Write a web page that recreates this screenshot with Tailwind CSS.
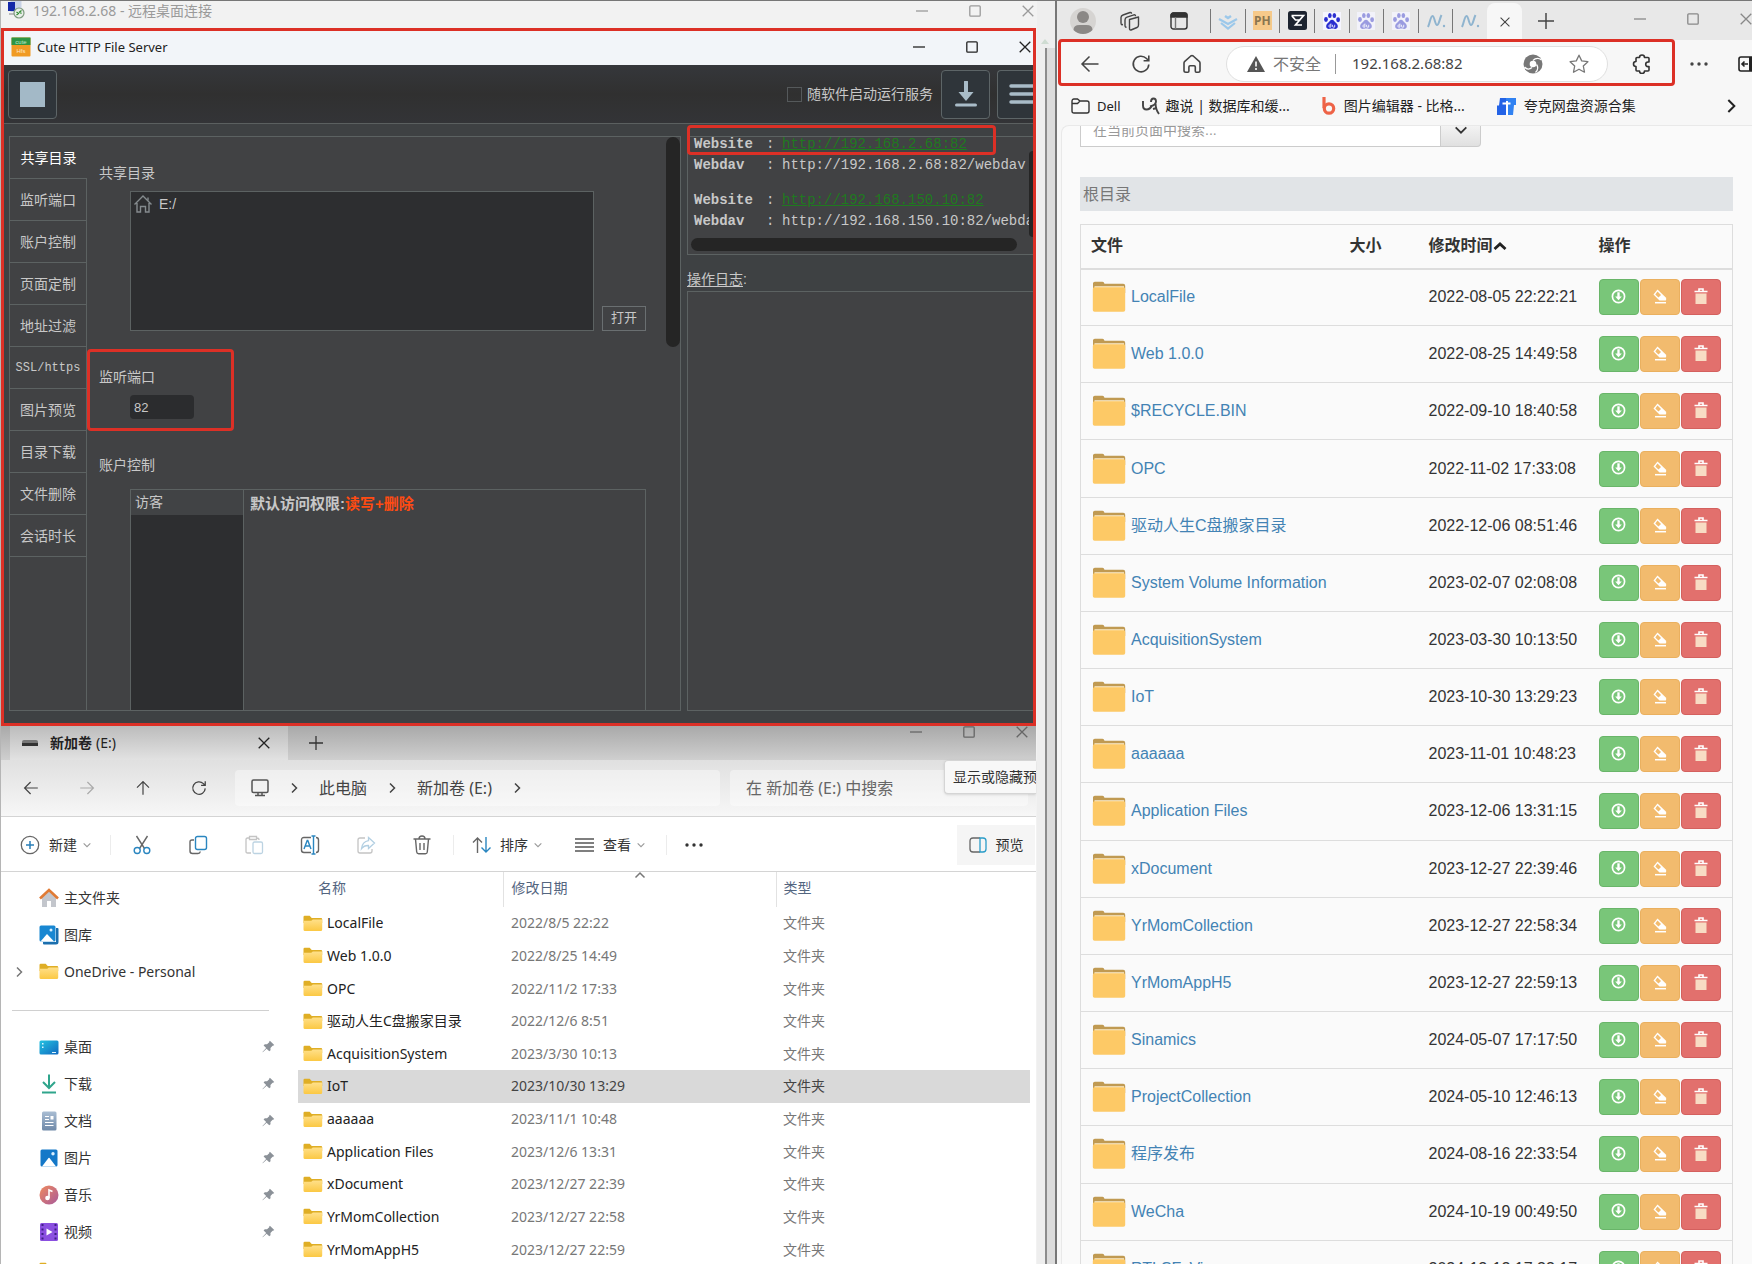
<!DOCTYPE html>
<html lang="zh-CN">
<head>
    <meta charset="UTF-8">
    <meta name="viewport" content="width=device-width, initial-scale=1.0">
    <title>Cute HTTP File Server</title>
    <script src="https://cdn.jsdelivr.net/npm/@tailwindcss/browser@4"></script>
</head>
<body class="bg-[#ececec] font-['Noto_Sans','Noto_Sans_CJK_SC',sans-serif] text-sm text-[#333]">

    <!-- Shared icons -->
    <svg class="absolute size-0">
        <defs>
            <linearGradient id="g-folder" x1="0" y1="0" x2="0" y2="1"><stop offset="0" stop-color="#ffe08a"/><stop offset="1" stop-color="#fbc843"/></linearGradient>
            <linearGradient id="g-desk" x1="0" y1="0" x2="1" y2="1"><stop offset="0" stop-color="#25c3e0"/><stop offset="1" stop-color="#1068c0"/></linearGradient>
            <linearGradient id="g-music" x1="0" y1="0" x2="1" y2="1"><stop offset="0" stop-color="#f08a5d"/><stop offset="1" stop-color="#a85a9b"/></linearGradient>
            <linearGradient id="g-doc" x1="0" y1="0" x2="0" y2="1"><stop offset="0" stop-color="#a9bdd3"/><stop offset="1" stop-color="#6f89a8"/></linearGradient>
        </defs>
        <symbol id="min" viewBox="0 0 12 12"><path d="M0 6h12" fill="none" stroke="currentColor" stroke-width="1.3"/></symbol>
        <symbol id="max" viewBox="0 0 12 12"><rect x=".8" y=".8" width="10.4" height="10.4" rx="1" fill="none" stroke="currentColor" stroke-width="1.3"/></symbol>
        <symbol id="close" viewBox="0 0 12 12"><path d="M.7.7l10.6 10.6M11.3.7L.7 11.3" fill="none" stroke="currentColor" stroke-width="1.3"/></symbol>
        <symbol id="plus" viewBox="0 0 12 12"><path d="M6 0v12M0 6h12" fill="none" stroke="currentColor" stroke-width="1.1"/></symbol>
        <symbol id="right" viewBox="0 0 12 12"><path d="M4 1.5L8.500 6 4 10.500" fill="none" stroke="currentColor" stroke-width="1.500"/></symbol>
        <symbol id="down" viewBox="0 0 12 12"><path d="M2 4l4 4 4-4" fill="none" stroke="currentColor" stroke-width="1.3"/></symbol>
        <symbol id="up" viewBox="0 0 12 12"><path d="M1.500 8.500L6 4l4.500 4.500" fill="none" stroke="currentColor" stroke-width="1.500"/></symbol>
        <symbol id="back" viewBox="0 0 20 20"><path d="M18.500 10H2M9.500 2.500L2 10l7.500 7.500" fill="none" stroke="currentColor" stroke-width="1.5"/></symbol>
        <symbol id="reload" viewBox="0 0 20 20"><path d="M17.800 10.500A7.800 7.800 0 1 1 15.500 4.500L17.500 6.500M17.800 1.500v5.200h-5.200" fill="none" stroke="currentColor" stroke-width="1.6"/></symbol>
        <symbol id="dots" viewBox="0 0 18 6"><g fill="currentColor"><circle cx="2" cy="3" r="1.700"/><circle cx="9" cy="3" r="1.700"/><circle cx="16" cy="3" r="1.700"/></g></symbol>
        <symbol id="folder" viewBox="0 0 20 17"><path d="M.5 2Q.5.8 1.700.8h5l2 2.200h9.300q1.200 0 1.200 1.200V8H.5z" fill="#dfae25"/><path d="M.5 5.800h7.800l1.500-1.300h9.400V14.500q0 1.500-1.500 1.500H2q-1.500 0-1.500-1.500z" fill="url(#g-folder)"/></symbol>
        <symbol id="bigfolder" viewBox="0 0 34 32"><path d="M1 2.500Q1 .7 2.800.7h7.700q1.500 0 2 2h18.700q2 0 2 2V12H1z" fill="#c09a52"/><path d="M2.500 5.300h29.500V9H2.500z" fill="#fff3d6"/><path d="M.8 8q0-1.700 1.700-1.700h29q1.700 0 1.700 1.700v21q0 1.800-1.800 1.800H2.600Q.8 30.800.8 29z" fill="#fdc966"/></symbol>
        <symbol id="paw" viewBox="0 0 20 20"><g fill="currentColor"><ellipse cx="3.300" cy="8.300" rx="2.100" ry="2.700"/><ellipse cx="7.600" cy="3.900" rx="2" ry="2.900"/><ellipse cx="12.600" cy="3.900" rx="2" ry="2.900"/><ellipse cx="16.800" cy="8.600" rx="2.100" ry="2.700"/><path d="M10 8.500c2 0 3 2.200 4.300 3.500 3.500 3 2.500 6.800-.8 6.800-1.500 0-2.200-.4-3.500-.4s-2 .4-3.500.4c-3.300 0-4.300-3.800-.8-6.800C7 10.700 8 8.500 10 8.500z"/></g><path d="M8.800 12.800v4H7.500q-1-.1-1-1.200t1-1.200h1.300M10.600 14.200v2q0 .6.700.6H13v-2.600" fill="none" stroke="#fff" stroke-width=".9"/></symbol>
        <symbol id="pin" viewBox="0 0 14 14"><path d="M8.500.8l4.700 4.700-1.300.8-.5-.1-2.300 2.300.1 2.500-1.400 1.200L5 9.300.8 13.300l-.3-.3 4-4.300L1.700 5.900 3 4.600l2.400.1L7.800 2.500l-.1-.6z" fill="#8b9198"/></symbol>
        <symbol id="nwave" viewBox="0 0 20 16"><path d="M2 14C4 10 4.500 3 6.500 3S9 12 11 12s2.500-6 4.500-10" fill="none" stroke="#8fb4cf" stroke-width="2"/><circle cx="18" cy="13" r="1.200" fill="#8fb4cf"/></symbol>
        <symbol id="pic" viewBox="0 0 18 18"><rect x=".5" y=".5" width="17" height="17" rx="1.500" fill="#1478c8"/><path d="M2 17.500L8.500 9q.5-.6 1 0l6.500 8.500z" fill="#fff"/><circle cx="13" cy="4.800" r="1.700" fill="#d9efff"/></symbol>
    </svg>

    <div class="relative grid h-screen grid-cols-[1037fr_20fr_695fr] overflow-hidden border-t border-[#777]">

        <!-- Remote desktop -->
        <div class="flex min-w-0 flex-col overflow-hidden border-l border-[#b5b5b5] bg-[#f2f2f2]">
            <header class="flex h-[27px] shrink-0 items-start pl-[6px] text-[#9a9a9a]">
                <svg class="mr-2 size-[18px]" viewBox="0 0 18 18"><rect x="3.500" y="0" width="11" height="11" fill="#c9d3e6"/><rect x="1" y="1" width="7" height="9" fill="#1428a8"/><path d="M2 12h8v2H2z" fill="#bbb"/><circle cx="12" cy="12" r="5" fill="#e9eee9" stroke="#7f9a7f" stroke-width="1.200"/><path d="M9.500 11l2 1.500-2 1.500M14.500 9.500l-2 1.500 2 1.500" fill="none" stroke="#2d8a2d" stroke-width="1.200"/></svg>
                <h1 class="leading-5">192.168.2.68 - 远程桌面连接</h1>
                <div class="ml-auto flex gap-[41px] pt-1 pr-[3px]">
                    <button aria-label="最小化"><svg class="size-3"><use href="#min"/></svg></button>
                    <button aria-label="最大化"><svg class="size-3"><use href="#max"/></svg></button>
                    <button aria-label="关闭"><svg class="size-3"><use href="#close"/></svg></button>
                </div>
            </header>

            <!-- File server window -->
            <section class="mr-px shrink-0 border-[3px] border-[#dc3026] bg-[#3e4143] font-['Liberation_Sans','Noto_Sans_CJK_SC',sans-serif] text-[#c8c8c8]">
                <div class="flex h-[34px] items-center bg-[#f2f5f9] pb-[2px] pl-[7px] text-[#222]">
                    <svg class="mr-[6px] size-5" viewBox="0 0 20 20"><rect x=".5" y=".5" width="19" height="19" rx="1" fill="#f09a24"/><path d="M.5.500h19V8H.5z" fill="#2e9443"/><text x="10" y="6.500" font-size="6" text-anchor="middle" fill="#bfe6c6">cute</text><text x="10" y="16" font-size="6" text-anchor="middle" fill="#ffe7c4">Hfs</text></svg>
                    <h2 class="font-['Noto_Sans',sans-serif] text-[13px]">Cute HTTP File Server</h2>
                    <div class="ml-auto flex gap-[41px] pr-[2px]">
                        <button aria-label="最小化"><svg class="size-3"><use href="#min"/></svg></button>
                        <button aria-label="最大化"><svg class="size-3"><use href="#max"/></svg></button>
                        <button aria-label="关闭"><svg class="size-3"><use href="#close"/></svg></button>
                    </div>
                </div>

                <div class="flex h-[59px] items-center overflow-hidden border-b border-[#5b6060] bg-linear-to-b from-[#35373b] via-[#303030] to-[#333437] pl-1">
                    <button aria-label="停止" class="flex size-[49px] items-center justify-center rounded-sm border border-[#5d6567] bg-[#2f353a]"><span class="size-[25px] bg-[#a3b9c7]"></span></button>
                    <label class="mr-2 ml-auto flex items-center gap-[5px] whitespace-nowrap">
                        <input type="checkbox" class="size-[15px] appearance-none border border-[#55595b]">
                        随软件启动运行服务
                    </label>
                    <button aria-label="下载" class="mr-[7px] flex size-[49px] items-center justify-center rounded-sm border border-[#5d6567] bg-[#2f353a]">
                        <svg class="h-[26px] w-[22px]" viewBox="0 0 22 26" fill="none" stroke="#a9bcc8"><path d="M11 1v12" stroke-width="4" stroke-linecap="round"/><path d="M3.500 11h15L11 20z" fill="#a9bcc8" stroke="none"/><path d="M1.500 24h19" stroke-width="3" stroke-linecap="round"/></svg>
                    </button>
                    <button aria-label="菜单" class="flex h-[49px] w-9 items-center justify-end rounded-l-sm border border-r-0 border-[#5d6567] bg-[#2f353a]">
                        <svg class="h-[22px] w-6" viewBox="0 0 24 22" stroke="#a9bcc8" stroke-width="3.500" stroke-linecap="round"><path d="M2 3h24M2 11h24M2 19h24"/></svg>
                    </button>
                </div>

                <div class="flex gap-[6px] pt-3 pb-3 pl-[5px]">
                    <div class="flex w-[672px] border border-[#5c6262] bg-[#414244]">
                        <nav class="flex w-[77px] shrink-0 flex-col">
                            <button class="h-[42px] border-b border-[#5c6262] text-white">共享目录</button>
                            <div id="tabs" class="flex flex-1 flex-col border-r border-[#5c6262]"></div>
                        </nav>

                        <div class="min-w-0 flex-1 pt-[26px] pr-5 pl-3">
                            <section>
                                <h3 class="h-5 leading-5">共享目录</h3>
                                <div class="mt-2 ml-[31px] flex items-end gap-2">
                                    <div class="flex h-[140px] flex-1 items-start gap-[6px] border border-[#5c6262] bg-[#2d2e30] p-[2px]">
                                        <svg class="size-5" viewBox="0 0 20 20" fill="none" stroke="#858b8e" stroke-width="1.400"><path d="M1.500 10.500L10 2l8.500 8.500M4 9v9h3.500v-5.500h5V18H16V9"/><path d="M15 3.500v3"/></svg>
                                        <span class="leading-5">E:/</span>
                                    </div>
                                    <button class="h-[25px] w-11 border border-[#6a6f71] text-[13px]">打开</button>
                                </div>
                            </section>

                            <section class="relative mt-9">
                                <span class="absolute -top-[18px] -left-3 h-[82px] w-[147px] rounded-sm border-[3px] border-[#dc3026]"></span>
                                <label for="port" class="block h-5 leading-5">监听端口</label>
                                <input id="port" value="82" class="mt-2 ml-[31px] block h-6 w-16 rounded-sm bg-[#2b2c2e] px-1 text-[13px]">
                            </section>

                            <section class="mt-9">
                                <h3 class="h-5 leading-5">账户控制</h3>
                                <div class="mt-[14px] ml-[31px] flex h-[221px] border border-b-0 border-[#5c6262]">
                                    <div class="w-[113px] border-r border-[#5c6262] bg-[#2d2e30]">
                                        <p class="h-[25px] bg-[#414345] pl-1 leading-[25px]">访客</p>
                                    </div>
                                    <p class="pt-1 pl-[6px] text-[15px] leading-5 font-bold">默认访问权限:<span class="text-[#ff4b12]">读写+删除</span></p>
                                </div>
                            </section>
                        </div>

                        <div class="w-[14px] shrink-0"><div class="h-[210px] rounded-full bg-[#252525]"></div></div>
                    </div>

                    <div class="flex min-w-0 flex-1 flex-col">
                        <div class="relative border-y border-l border-[#5c6262] bg-[#414244] font-['Liberation_Mono',monospace]">
                            <span class="absolute -top-3 -left-px z-10 h-[30px] w-[309px] rounded-sm border-[3px] border-[#dc3026]"></span>
                            <dl class="grid grid-cols-[72px_16px_1fr] gap-y-[7px] overflow-hidden pl-[6px] leading-[14px] whitespace-nowrap">
                                <dt class="font-bold">Website</dt><dd>:</dd><dd><a href="#" class="text-[#1f7a1f] underline">http://192.168.2.68:82</a></dd>
                                <dt class="mb-[14px] font-bold">Webdav</dt><dd>:</dd><dd>http://192.168.2.68:82/webdav</dd>
                                <dt class="font-bold">Website</dt><dd>:</dd><dd><a href="#" class="text-[#1f7a1f] underline">http://192.168.150.10:82</a></dd>
                                <dt class="font-bold">Webdav</dt><dd>:</dd><dd>http://192.168.150.10:82/webda</dd>
                            </dl>
                            <div class="mt-[10px] mr-4 mb-[3px] ml-[3px] h-[13px] rounded-full bg-[#252525]"></div>
                            <div class="absolute top-[14px] right-0 h-[86px] w-[4px] rounded-l-full bg-[#252525]"></div>
                        </div>
                        <h3 class="mt-[14px] h-5 leading-5"><span class="underline underline-offset-2">操作日志</span>:</h3>
                        <div class="mt-[2px] flex-1 border-y border-l border-[#5c6262] bg-[#414244]"></div>
                    </div>
                </div>
            </section>

            <!-- File explorer window -->
            <section class="relative mr-px flex flex-1 flex-col bg-white">
                <div class="flex h-[34px] shrink-0 bg-linear-to-b from-[#a9a9a9] to-[#cfcfcf]">
                    <div class="ml-[9px] flex w-[278px] items-center bg-linear-to-b from-[#bcbcbc] to-[#e2e2e2] pr-[18px] pb-px pl-3 text-[#222]">
                        <svg class="mr-3 h-[6px] w-4" viewBox="0 0 16 6"><path d="M0 2q0-2 2-2h12q2 0 2 2v3H0z" fill="#777"/><path d="M0 3h16v3H0z" fill="#333"/></svg>
                        <span class="font-semibold">新加卷</span><span class="ml-1">(E:)</span>
                        <button aria-label="关闭标签页" class="ml-auto"><svg class="size-3"><use href="#close"/></svg></button>
                    </div>
                    <button aria-label="新标签页" class="ml-[21px]"><svg class="size-[14px]"><use href="#plus"/></svg></button>
                    <div class="ml-auto flex items-start gap-[41px] pr-2 text-[#666]">
                        <button aria-label="最小化"><svg class="size-3"><use href="#min"/></svg></button>
                        <button aria-label="最大化"><svg class="size-3"><use href="#max"/></svg></button>
                        <button aria-label="关闭"><svg class="size-3"><use href="#close"/></svg></button>
                    </div>
                </div>

                <div class="flex h-[57px] shrink-0 items-center overflow-hidden border-b border-[#d4d4d4] bg-linear-to-b from-[#e0e0e0] to-[#f7f7f7] pl-[2px] text-base whitespace-nowrap text-[#444]">
                    <button aria-label="后退" class="flex w-14 justify-center"><svg class="size-4"><use href="#back"/></svg></button>
                    <button aria-label="前进" class="flex w-14 justify-center text-[#aaa]"><svg class="size-4 rotate-180"><use href="#back"/></svg></button>
                    <button aria-label="向上" class="flex w-14 justify-center"><svg class="size-4 rotate-90"><use href="#back"/></svg></button>
                    <button aria-label="刷新" class="flex w-14 justify-center"><svg class="size-4"><use href="#reload"/></svg></button>
                    <div class="ml-2 flex h-9 flex-1 items-center gap-[19px] rounded bg-white/40 pl-4">
                        <svg class="size-[18px]" viewBox="0 0 18 18" fill="none" stroke="#555" stroke-width="1.500"><rect x="1" y="1" width="16" height="12.500" rx="1.500"/><path d="M4 16.500h10M7 13.500v3M11 13.500v3"/></svg>
                        <svg class="size-3"><use href="#right"/></svg>
                        <span>此电脑</span>
                        <svg class="size-3"><use href="#right"/></svg>
                        <span>新加卷 (E:)</span>
                        <svg class="size-3"><use href="#right"/></svg>
                    </div>
                    <input type="search" aria-label="搜索" placeholder="在 新加卷 (E:) 中搜索" class="mr-2 ml-[10px] h-9 w-[298px] rounded bg-white/40 pl-4 placeholder:text-[#666]">
                </div>
                <div class="absolute top-[34px] right-0 h-[34px] w-[92px] overflow-hidden rounded-l border border-r-0 border-[#d5d5d5] bg-[#f8f8f8] pl-2 leading-8 whitespace-nowrap shadow">显示或隐藏预</div>

                <div class="flex h-[55px] shrink-0 items-center border-b border-[#d4d4d4] pt-px whitespace-nowrap">
                    <button class="mr-[18px] ml-[19px] flex items-center">
                        <svg class="mr-[9px] size-5" viewBox="0 0 20 20" fill="none"><circle cx="10" cy="10" r="8.700" stroke="#666" stroke-width="1.300"/><path d="M10 6v8M6 10h8" stroke="#2a7fb8" stroke-width="1.500"/></svg>
                        新建
                        <svg class="ml-[5px] size-[10px] text-[#999]"><use href="#down"/></svg>
                    </button>
                    <div class="flex border-x border-[#ececec] px-[3px]">
                        <button aria-label="剪切" class="flex w-14 justify-center"><svg class="size-5" viewBox="0 0 20 20" fill="none" stroke-width="1.400"><path d="M4.500 1l8 12.500M15.500 1l-8 12.500" stroke="#666"/><circle cx="5.200" cy="15.500" r="3" stroke="#2a86c0"/><circle cx="14.800" cy="15.500" r="3" stroke="#2a86c0"/></svg></button>
                        <button aria-label="复制" class="flex w-14 justify-center"><svg class="size-5" viewBox="0 0 20 20" fill="none" stroke-width="1.400"><path d="M6 5H4Q2 5 2 7v9q0 2.500 2.500 2.500H10q2 0 2.300-2" stroke="#666"/><rect x="7.500" y="1.500" width="11" height="13" rx="2" stroke="#2a86c0"/></svg></button>
                        <button aria-label="粘贴" class="flex w-14 justify-center"><svg class="size-5" viewBox="0 0 20 20" fill="none" stroke-width="1.300"><path d="M7 18H3.500Q2 18 2 16.500v-12Q2 3 3.500 3H5M13 3q2 0 2 2M5.500 1.500h7v3h-7z" stroke="#c4c4c4"/><rect x="9" y="7" width="9.500" height="11.500" rx="1.500" stroke="#bcd3e2"/></svg></button>
                        <button aria-label="重命名" class="flex w-14 justify-center"><svg class="size-5" viewBox="0 0 20 20" fill="none" stroke-width="1.400"><path d="M11 2.500H4Q1.500 2.500 1.500 5v10q0 2.500 2.500 2.500h7M16 2.500q2.500 0 2.500 2.500v10q0 2.500-2.500 2.500" stroke="#666"/><path d="M13.500 1v18M11.500 1h4M11.500 19h4M4 14l3.200-8.500h.6L11 14M5 11h5" stroke="#2a86c0"/></svg></button>
                        <button aria-label="共享" class="flex w-14 justify-center"><svg class="size-5" viewBox="0 0 20 20" fill="none" stroke-width="1.300"><path d="M9 3H4Q2 3 2 5v11q0 2 2 2h10q2 0 2-2v-2" stroke="#c4c4c4"/><path d="M12.500 2.500L18.500 8l-6 5.500v-3q-4.500-.2-7 3.200.8-7 7-8z" stroke="#b2cfe2"/></svg></button>
                        <button aria-label="删除" class="flex w-14 justify-center"><svg class="size-5" viewBox="0 0 20 20" fill="none" stroke="#666" stroke-width="1.400"><path d="M1.500 4h17M7 4q0-3 3-3t3 3M3.500 4l1.200 13q.2 1.800 2 1.800h6.600q1.800 0 2-1.800L16.500 4M8 8v7M12 8v7"/></svg></button>
                    </div>
                    <div class="flex items-center gap-8 border-r border-[#ececec] pr-5 pl-[18px]">
                        <button class="flex items-center">
                            <svg class="mr-2 h-[18px] w-5" viewBox="0 0 20 18" fill="none" stroke-width="1.400"><path d="M5.500 17V2M1 6.500L5.500 2 10 6.500" stroke="#666"/><path d="M14 1v15M9.500 11.500L14 16l4.500-4.500" stroke="#2a86c0"/></svg>
                            排序
                            <svg class="ml-[5px] size-[10px] text-[#999]"><use href="#down"/></svg>
                        </button>
                        <button class="flex items-center">
                            <svg class="mr-[9px] h-[14px] w-[19px]" viewBox="0 0 19 14" stroke="#555" stroke-width="1.300"><path d="M0 1h19M0 5h19M0 9h19M0 13h19"/></svg>
                            查看
                            <svg class="ml-[5px] size-[10px] text-[#999]"><use href="#down"/></svg>
                        </button>
                    </div>
                    <button aria-label="更多" class="ml-[18px]"><svg class="h-[6px] w-[18px]"><use href="#dots"/></svg></button>
                    <button class="mr-px ml-auto flex h-10 w-[78px] items-center justify-center gap-[9px] bg-[#f5f5f5]">
                        <svg class="h-4 w-[18px]" viewBox="0 0 18 16" fill="none" stroke-width="1.300"><path d="M11 1H4Q1 1 1 4v8q0 3 3 3h7" stroke="#666"/><path d="M11 1h3q3 0 3 3v8q0 3-3 3h-3z" stroke="#2a9cc8"/></svg>
                        预览
                    </button>
                </div>

                <div class="flex flex-1">
                    <aside class="w-[280px] shrink-0 pt-[7px]">
                        <div class="flex h-[37px] items-center pl-[38px]"><svg class="mr-[5px] size-5" viewBox="0 0 20 20"><path d="M3 9l7-6.500L17 9v10h-5v-6H8v6H3z" fill="#c3c6cc"/><path d="M1 10.500L10 2l9 8.500" fill="none" stroke="#e07b35" stroke-width="2.600"/></svg>主文件夹</div>
                        <div class="flex h-[37px] items-center pl-[38px]"><svg class="mr-[5px] size-5" viewBox="0 0 20 20"><path d="M17 3h1.500q1 0 1 1v13q0 2.500-2.500 2.500H5q-1 0-1-1V17h13z" fill="#1b6fae"/><rect x=".5" y=".5" width="16" height="16" rx="1.500" fill="#1887d2"/><path d="M1.500 16.500L8 9l7 7.500z" fill="#fff"/><circle cx="12" cy="5" r="1.500" fill="#d9efff"/></svg>图库</div>
                        <div class="flex h-[37px] items-center pl-3"><svg class="mr-[14px] size-3 text-[#777]"><use href="#right"/></svg><svg class="mr-[5px] h-[17px] w-5"><use href="#folder"/></svg>OneDrive - Personal</div>
                        <hr class="mt-5 mr-3 mb-[17px] ml-[11px] border-[#d0d0d0]">
                        <div class="flex h-[37px] items-center pr-[6px] pl-[38px]"><svg class="mr-[5px] size-5" viewBox="0 0 20 20"><rect x=".5" y="3.500" width="19" height="14" rx="1.500" fill="url(#g-desk)"/><path d="M3 6h1.500v1.500H3zM3 9.500h1.500V11H3zM13 15h4v1h-4z" fill="#dff6ff"/></svg>桌面<svg class="ml-auto size-[13px]"><use href="#pin"/></svg></div>
                        <div class="flex h-[37px] items-center pr-[6px] pl-[38px]"><svg class="mr-[5px] size-5" viewBox="0 0 20 20" fill="none" stroke="#2fa58c" stroke-width="2"><path d="M10 .5v13M4 8l6 6 6-6M3 18.500h14"/></svg>下载<svg class="ml-auto size-[13px]"><use href="#pin"/></svg></div>
                        <div class="flex h-[37px] items-center pr-[6px] pl-[38px]"><svg class="mr-[5px] size-5" viewBox="0 0 20 20"><rect x="3" y=".5" width="14.500" height="19" rx="1.500" fill="url(#g-doc)"/><path d="M6 5.500h4M6 8.500h4M6 11.500h8.500M6 14.500h8.500" stroke="#fff" stroke-width="1.200"/><path d="M11.500 5h3v3.500h-3z" fill="#fff"/></svg>文档<svg class="ml-auto size-[13px]"><use href="#pin"/></svg></div>
                        <div class="flex h-[37px] items-center pr-[6px] pl-[39px]"><svg class="mr-[6px] size-[18px]"><use href="#pic"/></svg>图片<svg class="ml-auto size-[13px]"><use href="#pin"/></svg></div>
                        <div class="flex h-[37px] items-center pr-[6px] pl-[38px]"><svg class="mr-[5px] size-5" viewBox="0 0 20 20"><circle cx="10" cy="10" r="9.500" fill="url(#g-music)"/><circle cx="8.500" cy="13" r="2.300" fill="#fff"/><path d="M10 13V5l3.500 1.500" fill="none" stroke="#fff" stroke-width="1.600"/></svg>音乐<svg class="ml-auto size-[13px]"><use href="#pin"/></svg></div>
                        <div class="flex h-[37px] items-center pr-[6px] pl-[39px]"><svg class="mr-[6px] size-[18px]" viewBox="0 0 18 18"><rect width="18" height="18" rx="1.500" fill="#8a4fe0"/><path d="M2.500 1v16M15.500 1v16" stroke="#3f1e86" stroke-width="2" stroke-dasharray="2 2.500"/><path d="M6.500 5.500l6 3.500-6 3.500z" fill="#fff"/></svg>视频<svg class="ml-auto size-[13px]"><use href="#pin"/></svg></div>
                        <div class="pt-3 pl-[38px]"><svg class="h-[17px] w-5"><use href="#folder"/></svg></div>
                    </aside>

                    <div class="min-w-0 flex-1 pr-[6px] pl-[17px]">
                        <table class="w-full table-fixed">
                            <thead>
                                <tr class="h-[35px] text-left text-[#53657f]">
                                    <th class="w-[205px] border-r border-[#e2e2e2] pb-[3px] pl-5 font-normal">名称</th>
                                    <th class="relative w-[273px] border-r border-[#e2e2e2] pb-[3px] pl-2 font-normal">修改日期<svg class="absolute -top-[3px] left-[130px] size-3 text-[#777]"><use href="#up"/></svg></th>
                                    <th class="pb-[3px] pl-[7px] font-normal">类型</th>
                                </tr>
                            </thead>
                        </table>
                        <table class="h-[359px] w-full table-fixed">
                            <tbody id="explorer"></tbody>
                        </table>
                    </div>
                </div>
            </section>
        </div>

        <!-- Remote desktop scroll bar -->
        <div class="flex border-r-2 border-[#777] bg-[#eeeeee] pt-[38px]">
            <div class="ml-1 flex w-full flex-col">
                <svg class="h-[5px] w-2" viewBox="0 0 8 5"><path d="M4 0l4 5H0z" fill="#cfdcd2"/></svg>
                <div class="mt-1 ml-1 flex-1 border-l-2 border-[#8c8c8c] bg-[#dcdcdc]"></div>
            </div>
        </div>

        <!-- Browser -->
        <div class="flex min-w-0 flex-col overflow-hidden bg-[#f7f7f7]">
            <header class="flex h-[39px] shrink-0 items-center bg-[#e8e8e8] pl-[13px] text-[#444]">
                <svg class="size-[26px] shrink-0" viewBox="0 0 26 26"><circle cx="13" cy="13" r="13" fill="#d6d4d2"/><circle cx="13" cy="9" r="6" fill="#8b8886"/><path d="M3.500 22q0-5 6-5h7q6 0 6 5-4 4-9.500 4t-9.500-4z" fill="#8b8886"/></svg>
                <button aria-label="工作区" class="ml-6"><svg class="size-5" viewBox="0 0 20 20" fill="none" stroke="#444" stroke-width="1.400" stroke-linejoin="round"><path d="M9.500 8.500l9-2.500v8q0 2-1.500 2.500l-6 2.500q-1.500.3-1.500-1.500z"/><path d="M6.500 16l-.8.2Q5 16 5 14.500V9q0-2 2-2.800l7-2.400q1.500-.3 1.500 1.500M3 13.500l-1.200.2Q1 13.500 1 12V6.500Q1 4.700 3 4l7-2.500q1.500-.3 1.500 1.200"/></svg></button>
                <button aria-label="标签操作" class="ml-[30px]"><svg class="h-[18px] w-[18px]" viewBox="0 0 18 18" fill="none" stroke="#333" stroke-width="1.400"><rect x="1" y="1" width="16" height="16" rx="2.500"/><path d="M1 3.500Q1 1 3.500 1h11Q17 1 17 3.500V5H1z" fill="#333"/><path d="M5.500 5v12" stroke="#777"/></svg></button>
                <div class="ml-[22px] flex h-6 w-[277px] text-[#4c50c8]">
                    <span class="flex flex-1 items-center justify-center border-l border-[#777]"><svg class="size-5" viewBox="0 0 20 20" fill="none" stroke="#9cc8ea" stroke-width="2.200"><path d="M1 8l9 5 9-5M3 12l7 5.500 7-5.500"/><path d="M7 5l3 2 3-2" stroke-width="2.500"/></svg></span>
                    <span class="flex flex-1 items-center justify-center border-l border-[#777]"><b class="size-[19px] bg-[#f6c98a] text-center text-xs leading-[19px] text-[#8a7550]">PH</b></span>
                    <span class="flex flex-1 items-center justify-center border-l border-[#777]"><svg class="size-[19px]" viewBox="0 0 19 19"><rect width="19" height="19" rx="2.500" fill="#1d2430"/><path d="M3.500 4.500h12L7.500 14H14M4 5l3.500 4h5" fill="none" stroke="#fff" stroke-width="1.700"/></svg></span>
                    <span class="flex flex-1 items-center justify-center border-l border-[#777]"><svg class="size-[18px] bg-[#f5f5ff] text-[#2a2ed0]"><use href="#paw"/></svg></span>
                    <span class="flex flex-1 items-center justify-center border-l border-[#777]"><svg class="size-[18px] bg-[#f2f2fa] text-[#9a9be0]"><use href="#paw"/></svg></span>
                    <span class="flex flex-1 items-center justify-center border-l border-[#777]"><svg class="size-[18px] bg-[#f2f2fa] text-[#9a9be0]"><use href="#paw"/></svg></span>
                    <span class="flex flex-1 items-center justify-center border-l border-[#777]"><svg class="h-4 w-5"><use href="#nwave"/></svg></span>
                    <span class="flex flex-1 items-center justify-center border-l border-[#777]"><svg class="h-4 w-5"><use href="#nwave"/></svg></span>
                </div>
                <button aria-label="关闭标签页" class="mt-[2px] flex h-[37px] w-[35px] shrink-0 items-center justify-center rounded-t-lg bg-[#f7f7f7]"><svg class="size-[10px]"><use href="#close"/></svg></button>
                <button aria-label="新标签页" class="ml-4"><svg class="size-4"><use href="#plus"/></svg></button>
                <div class="ml-auto flex gap-[41px] pb-1 text-[#888]">
                    <button aria-label="最小化"><svg class="size-3"><use href="#min"/></svg></button>
                    <button aria-label="最大化"><svg class="size-3"><use href="#max"/></svg></button>
                    <button aria-label="关闭"><svg class="size-3"><use href="#close"/></svg></button>
                </div>
            </header>

            <div class="relative flex h-12 shrink-0 items-center pl-[23px] text-[#444]">
                <span class="pointer-events-none absolute -top-px left-px h-[47px] w-[617px] rounded-sm border-[3px] border-[#dc3026]"></span>
                <button aria-label="后退"><svg class="size-5"><use href="#back"/></svg></button>
                <button aria-label="刷新" class="ml-[31px]"><svg class="size-5"><use href="#reload"/></svg></button>
                <button aria-label="主页" class="ml-[31px]"><svg class="size-5" viewBox="0 0 20 20" fill="none" stroke="#444" stroke-width="1.600" stroke-linejoin="round"><path d="M2 9q0-1 .8-1.700l6-5.300q1.200-.9 2.400 0l6 5.300q.8.700.8 1.700v7.500q0 1.700-1.700 1.700h-2q-1 0-1-1.200V13q0-1.200-1.200-1.200h-4q-1.200 0-1.200 1.200v4q0 1.200-1 1.200h-2Q2 18.200 2 16.500z"/></svg></button>
                <div class="ml-6 flex h-9 w-[382px] items-center rounded-full border border-[#e0e0e0] bg-white pl-5">
                    <svg class="mr-2 h-4 w-[18px]" viewBox="0 0 18 16"><path d="M9 0l9 16H0z" fill="#555"/><path d="M9 5.500v5M9 12v2" stroke="#fff" stroke-width="1.600"/></svg>
                    <span class="border-r border-[#999] pr-[14px] text-base leading-5 whitespace-nowrap text-[#777]">不安全</span>
                    <input aria-label="地址" value="192.168.2.68:82" class="ml-4 w-0 flex-1 text-[15px]">
                    <svg class="mr-[26px] size-5" viewBox="0 0 20 20"><circle cx="10" cy="10" r="9.500" fill="#777"/><circle cx="10" cy="10" r="3.300" fill="#fff"/><path d="M10 6.500Q14 2.500 18.500 6M13.500 10.500q3 4-1 8M9 13.500Q5 17 1.500 13" fill="none" stroke="#fff" stroke-width="1.300"/></svg>
                    <svg class="mr-[18px] size-5" viewBox="0 0 20 20" fill="none" stroke="#777" stroke-width="1.300" stroke-linejoin="round"><path d="M10 1.200l2.700 5.700 6.200.8-4.600 4.300 1.200 6.200-5.500-3-5.500 3L5.700 12 1.100 7.700l6.200-.8z"/></svg>
                </div>
                <button aria-label="扩展" class="ml-6"><svg class="size-5" viewBox="0 0 20 20" fill="none" stroke="#333" stroke-width="1.600" stroke-linejoin="round"><path d="M7.500 3.500a2.500 2.500 0 0 1 5 0H16q1 0 1 1V8h-1a2.300 2.300 0 0 0 0 4.600h1V16q0 1-1 1h-3.500a2.500 2.500 0 0 1-5 0H5q-1 0-1-1v-3.500a2.500 2.500 0 0 1 0-5V4.500q0-1 1-1z"/></svg></button>
                <button aria-label="更多" class="ml-[38px]"><svg class="h-[6px] w-[18px]"><use href="#dots"/></svg></button>
                <button aria-label="侧边栏" class="ml-auto"><svg class="h-4 w-[14px]" viewBox="0 0 14 16" fill="none" stroke="#222" stroke-width="1.600"><path d="M14 1H3Q1 1 1 3v10q0 2 2 2h11M10 8H4M6.500 5.500L4 8l2.500 2.500"/><path d="M12.500 1v14" stroke-width="3"/></svg></button>
            </div>

            <nav class="flex h-[37px] shrink-0 items-center pb-px pl-[14px] whitespace-nowrap text-[#222]">
                <a href="#" class="flex items-center gap-[7px]"><svg class="h-4 w-[19px]" viewBox="0 0 19 16" fill="none" stroke="#333" stroke-width="1.400"><path d="M1 3.500Q1 1 3 1h3.500l2.500 2h7q2 0 2 2v8q0 2-2 2H3q-2 0-2-2zM1 5.500h5.500L9 3"/></svg><span class="text-[13px]">Dell</span></a>
                <a href="#" class="ml-[21px] flex items-center gap-[6px]"><svg class="size-[18px]" viewBox="0 0 18 18" fill="none" stroke="#444" stroke-width="1.900"><path d="M1 4v4.500q0 4 3.500 4 3.500 0 5.500-4M9 5q0-3.500 2.500-3.500T14 4.500q0 3.500-6 5M13.500 5.500q0 7 3.500 11.500M11 12l3.500-1"/></svg>趣说 | 数据库和缓...</a>
                <a href="#" class="ml-8 flex items-center gap-2"><svg class="h-[18px] w-[14px]" viewBox="0 0 14 18" fill="none" stroke="#ee6347" stroke-width="3.200"><path d="M2 0v11"/><circle cx="7" cy="11.500" r="4.700"/></svg>图片编辑器 - 比格...</a>
                <a href="#" class="ml-8 flex items-center gap-2"><svg class="h-[17px] w-[19px]" viewBox="0 0 19 17"><path d="M3 0h6v17H0V7.500h2z" fill="#2463e6"/><path d="M9 0h10v7h-2l-1 10H9z" fill="#3182f2"/><path d="M5.500 5.500h8M10 3v14" stroke="#fff" stroke-width="2"/></svg>夸克网盘资源合集</a>
                <button aria-label="更多收藏" class="mr-[13px] ml-auto"><svg class="size-4"><use href="#right"/></svg></button>
            </nav>

            <main class="ml-1 min-h-0 flex-1 overflow-hidden rounded-tl-lg border-t border-l border-[#e9e9e9] bg-[#fafafa] pr-[19px] pl-[18px] font-['Liberation_Sans','Noto_Sans_CJK_SC',sans-serif] text-base">
                <div class="-mt-[14px] flex h-[35px] w-[401px]">
                    <input aria-label="搜索" placeholder="在当前页面中搜索..." class="min-w-0 flex-1 border border-[#ccc] bg-white px-3 text-sm placeholder:text-[#999]">
                    <button aria-label="展开" class="flex w-10 items-center justify-center rounded-r border border-l-0 border-[#ccc] bg-linear-to-b from-white to-[#e0e0e0]"><svg class="size-4"><use href="#down"/></svg></button>
                </div>
                <p class="mt-[30px] h-[34px] bg-[#e1e4e7] pl-[3px] leading-[35px] text-[#777]">根目录</p>
                <table class="mt-[13px] h-[1074px] w-full table-fixed border border-[#ddd]">
                    <thead>
                        <tr class="h-[44px] border-b-2 border-[#ddd] text-left">
                            <th class="w-[259px] pl-[10px]">文件</th>
                            <th class="w-[79px] pl-[10px]">大小</th>
                            <th class="w-[170px] pl-[10px]"><span class="flex items-center">修改时间<svg class="h-2 w-[14px]" viewBox="0 0 14 8"><path d="M1.500 7L7 2l5.500 5" fill="none" stroke="#222" stroke-width="2.800"/></svg></span></th>
                            <th class="pl-[10px]">操作</th>
                        </tr>
                    </thead>
                    <tbody id="files"></tbody>
                </table>
            </main>
        </div>
    </div>

    <script>
        const tabs = ["监听端口", "账户控制", "页面定制", "地址过滤", "SSL/https", "图片预览", "目录下载", "文件删除", "会话时长"];

        document.getElementById("tabs").innerHTML = tabs.map(name => `
            <button class="h-[42px] border-b border-[#5c6262] ${name.startsWith("SSL") ? "font-['Liberation_Mono',monospace] text-xs" : ""}">${name}</button>`).join("");

        const explorer = [
            ["LocalFile", "2022/8/5 22:22"],
            ["Web 1.0.0", "2022/8/25 14:49"],
            ["OPC", "2022/11/2 17:33"],
            ["驱动人生C盘搬家目录", "2022/12/6 8:51"],
            ["AcquisitionSystem", "2023/3/30 10:13"],
            ["IoT", "2023/10/30 13:29"],
            ["aaaaaa", "2023/11/1 10:48"],
            ["Application Files", "2023/12/6 13:31"],
            ["xDocument", "2023/12/27 22:39"],
            ["YrMomCollection", "2023/12/27 22:58"],
            ["YrMomAppH5", "2023/12/27 22:59"]
        ];

        document.getElementById("explorer").innerHTML = explorer.map(([name, date]) => `
            <tr class="${name === "IoT" ? "bg-[#d9d9d9] text-[#444]" : "text-[#777]"}">
                <td class="w-[205px] pl-[5px]"><span class="flex items-center gap-1 text-[#222]"><svg class="h-[17px] w-5"><use href="#folder"/></svg>${name}</span></td>
                <td class="w-[273px] pl-2">${date}</td>
                <td class="pl-[7px]">文件夹</td>
            </tr>`).join("");

        const files = [
            ["LocalFile", "2022-08-05 22:22:21"],
            ["Web 1.0.0", "2022-08-25 14:49:58"],
            ["$RECYCLE.BIN", "2022-09-10 18:40:58"],
            ["OPC", "2022-11-02 17:33:08"],
            ["驱动人生C盘搬家目录", "2022-12-06 08:51:46"],
            ["System Volume Information", "2023-02-07 02:08:08"],
            ["AcquisitionSystem", "2023-03-30 10:13:50"],
            ["IoT", "2023-10-30 13:29:23"],
            ["aaaaaa", "2023-11-01 10:48:23"],
            ["Application Files", "2023-12-06 13:31:15"],
            ["xDocument", "2023-12-27 22:39:46"],
            ["YrMomCollection", "2023-12-27 22:58:34"],
            ["YrMomAppH5", "2023-12-27 22:59:13"],
            ["Sinamics", "2024-05-07 17:17:50"],
            ["ProjectCollection", "2024-05-10 12:46:13"],
            ["程序发布", "2024-08-16 22:33:54"],
            ["WeCha", "2024-10-19 00:49:50"],
            ["RTLSFsView", "2024-12-12 17:33:17"]
        ];

        document.getElementById("files").innerHTML = files.map(([name, date]) => `
            <tr class="h-[57px] border-b border-[#ddd]">
                <td class="pl-[11px]"><a href="#" class="flex items-center gap-[5px] whitespace-nowrap text-[#4383b4]"><svg class="h-8 w-[34px]"><use href="#bigfolder"/></svg>${name}</a></td>
                <td></td>
                <td class="pl-[10px] whitespace-nowrap">${date}</td>
                <td class="pl-[10px]">
                    <div class="flex gap-px">
                        <button aria-label="下载" class="flex h-9 w-10 items-center justify-center rounded border border-[#69b569] bg-[#79c679] pb-[2px]"><svg class="size-[15px]" viewBox="0 0 16 16" fill="none" stroke="#fff" stroke-width="1.800"><circle cx="8" cy="8" r="6.500"/><path d="M8 3.500v5" stroke-width="2.500"/><path d="M4.500 8h7L8 12z" fill="#fff" stroke="none"/></svg></button>
                        <button aria-label="重命名" class="flex h-9 w-10 items-center justify-center rounded border border-[#eab05f] bg-[#f2bb6e] pb-[2px]"><svg class="size-4" viewBox="0 0 16 16"><path d="M5.500 1.500L13.800 9.500q1 1.500 0 3H7.500L1.500 6.500z" fill="#fff"/><path d="M5.500 3.500L9 7 6.500 9.500 3.300 6.400z" fill="#f2bb6e"/><path d="M3 14.700h11" stroke="#fff" stroke-width="1.500"/></svg></button>
                        <button aria-label="删除" class="flex h-9 w-10 items-center justify-center rounded border border-[#d4605e] bg-[#e2706d] pb-[2px]"><svg class="h-4 w-[14px]" viewBox="0 0 14 16" fill="none"><path d="M.5 3.500h13M5 3V1h4v2" stroke="#fff" stroke-width="1.600"/><path d="M1.500 5.500h11V16h-11z" fill="#f8dcc4"/></svg></button>
                    </div>
                </td>
            </tr>`).join("");
    </script>

</body>
</html>
